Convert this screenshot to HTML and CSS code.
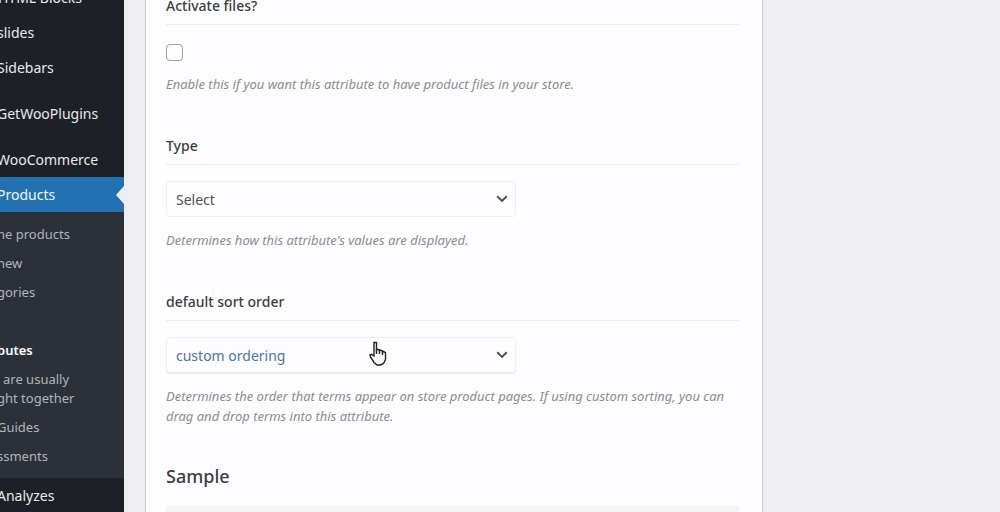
FILE: index.html
```
<!DOCTYPE html>
<html lang="en">
<head>
<meta charset="utf-8">
<title>Edit attribute</title>
<link rel="stylesheet" href="styles.css">
</head>
<body>
<div class="app">
  <nav class="sidebar">
    <a class="item indent" href="#">HTML Blocks</a>
    <a class="item" href="#">slides</a>
    <a class="item" href="#">Sidebars</a>
    <a class="item spaced" href="#">GetWooPlugins</a>
    <a class="item spaced" href="#">WooCommerce</a>
    <a class="item active" href="#">Products</a>
    <div class="submenu">
      <a class="subitem" href="#">ne products</a>
      <a class="subitem" href="#">new</a>
      <a class="subitem" href="#">gories</a>
      <a class="subitem current after-gap" href="#">butes</a>
      <a class="subitem" href="#"><span class="lead">are usually</span><br>ght together</a>
      <a class="subitem" href="#">Guides</a>
      <a class="subitem" href="#">ssments</a>
    </div>
    <a class="item" href="#">Analyzes</a>
  </nav>
  <main class="content">
    <form class="card">
      <section class="field">
        <label class="label" for="files">Activate files?</label>
        <input class="check" type="checkbox" id="files">
        <p class="help">Enable this if you want this attribute to have product files in your store.</p>
      </section>
      <section class="field">
        <label class="label" for="type">Type</label>
        <div class="picker">
          <select class="select" id="type"><option>Select</option></select>
          <svg class="chevron" viewBox="0 0 12 8"><path d="M1.2 1.2 6 5.9l4.8-4.7"/></svg>
        </div>
        <p class="help">Determines how this attribute's values are displayed.</p>
      </section>
      <section class="field">
        <label class="label" for="order">default sort order</label>
        <div class="picker">
          <select class="select hovered" id="order"><option>custom ordering</option></select>
          <svg class="chevron" viewBox="0 0 12 8"><path d="M1.2 1.2 6 5.9l4.8-4.7"/></svg>
          <svg class="pointer" viewBox="0 0 18 26"><path d="M5 1.5h2.500V9l1-.8 2 .5v1.300l1-.8 2 .6v1.200l1-.5 2 1v7l-2 4-3 1.500H8l-3-2.500-3.500-5.500-.5-2 1.500-.6L5 15z"/><path d="M7.500 8v5M10.500 9v4M13.500 10v4"/></svg>
        </div>
        <p class="help">Determines the order that terms appear on store product pages. If using custom sorting, you can drag and drop terms into this attribute.</p>
      </section>
      <h2 class="heading">Sample</h2>
      <div class="panel"></div>
    </form>
  </main>
</div>
</body>
</html>
```
FILE: styles.css
```
* {
  box-sizing: border-box;
}

body {
  margin: 0;
  background: #eeedf0;
  color: #3c3d42;
  font-family: "Segoe UI", "Noto Sans", "Open Sans", sans-serif;
  font-size: 14px;
}

.app {
  display: flex;
  height: 100vh;
  overflow: hidden;
}

.sidebar {
  flex: 0 0 127px;
  margin: -20px 0 0 -3px;
  background: #1d2127;
}

.item {
  display: block;
  position: relative;
  height: 35px;
  color: #e8e9eb;
  font-size: 14px;
  line-height: 35px;
  text-decoration: none;
  white-space: nowrap;
}

.indent {
  padding-left: 1px;
}

.spaced {
  margin-top: 11px;
}

.active {
  background: #2271b1;
  color: #f4f8fc;
}

.active::after {
  content: "";
  position: absolute;
  top: 9px;
  right: 0;
  border: 9px solid transparent;
  border-left: 0;
  border-right: 8px solid #eeedf0;
}

.submenu {
  padding: 8px 0 7px;
  background: #2c3038;
}

.subitem {
  display: block;
  padding: 5px 0;
  color: #b2b5ba;
  font-size: 13px;
  line-height: 19px;
  text-decoration: none;
  white-space: nowrap;
}

.lead {
  padding-left: 6px;
}

.current {
  color: #ffffff;
  font-weight: 600;
}

.after-gap {
  margin-top: 29px;
}

.content {
  flex: 1;
  padding-left: 21px;
}

.card {
  max-width: 618px;
  min-height: 100%;
  margin-top: -4px;
  padding: 0 23px 20px 20px;
  border: 1px solid #c8c8ce;
  border-top: 0;
  background: #fdfcfe;
}

.field {
  margin-bottom: 42px;
}

.field:last-of-type {
  margin-bottom: 38px;
}

.label {
  display: block;
  margin-bottom: 16px;
  padding-bottom: 8px;
  border-bottom: 1px solid #ebebee;
  font-weight: 500;
  line-height: 20px;
}

.check {
  appearance: none;
  display: block;
  width: 17px;
  height: 17px;
  margin: 19px 0 13px;
  border: 1px solid #a0a1a7;
  border-radius: 4px;
  background: #fdfcfe;
}

.picker {
  position: relative;
  max-width: 350px;
}

.select {
  appearance: none;
  display: block;
  width: 100%;
  height: 36px;
  padding: 0 32px 0 9px;
  border: 1px solid #eeeef1;
  border-radius: 4px;
  background: #fdfcfe;
  color: #515257;
  font: inherit;
}

.hovered {
  color: #4a76a0;
  box-shadow: 0 1px 1px #e9e9ed;
}

.chevron {
  position: absolute;
  top: 14px;
  right: 8px;
  width: 12px;
  height: 8px;
  fill: none;
  stroke: #505156;
  stroke-width: 2;
}

.pointer {
  position: absolute;
  top: 4px;
  left: 203px;
  width: 18px;
  height: 26px;
  fill: #ffffff;
  stroke: #222226;
  stroke-width: 1.4;
}

.help {
  margin: 13px 0 0;
  color: #8b8c90;
  font-size: 13px;
  font-style: italic;
  line-height: 20px;
}

.heading {
  margin: 0 0 18px;
  font-size: 18px;
  font-weight: 500;
  line-height: 24px;
}

.panel {
  height: 40px;
  background: #f4f4f6;
}
```
